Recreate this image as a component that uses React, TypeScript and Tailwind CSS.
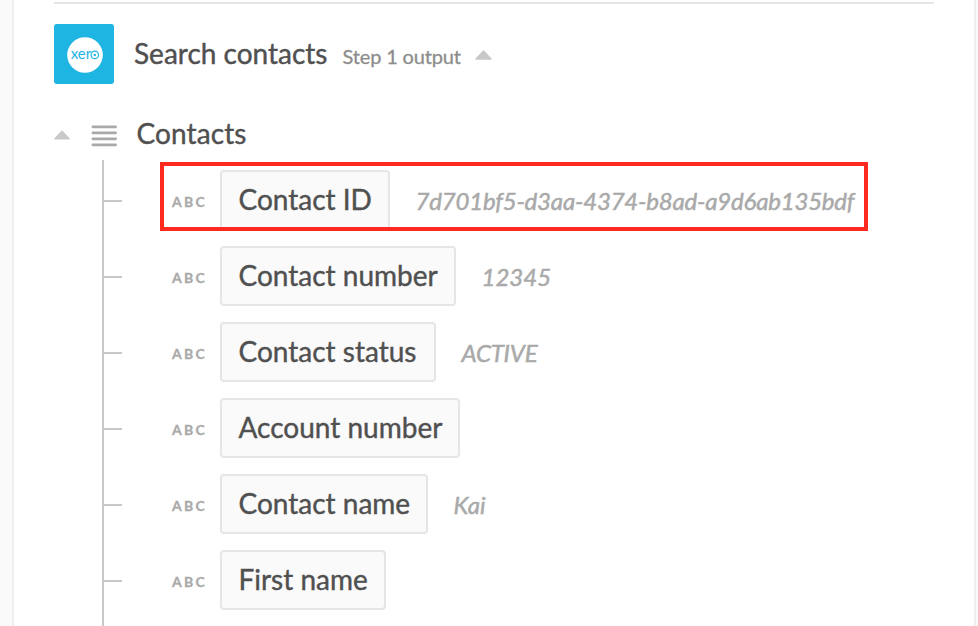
type Field = { name: string; value?: string; width: string; tracking?: string };

const fields: Field[] = [
  { name: "Contact ID", value: "7d701bf5-d3aa-4374-b8ad-a9d6ab135bdf", width: "w-[170px]", tracking: "tracking-[-0.2px]" },
  { name: "Contact number", value: "12345", width: "w-[236px]", tracking: "tracking-normal" },
  { name: "Contact status", value: "ACTIVE", width: "w-[216px]", tracking: "tracking-[-0.2px]" },
  { name: "Account number", width: "w-[240px]" },
  { name: "Contact name", value: "Kai", width: "w-[208px]", tracking: "tracking-normal" },
  { name: "First name", width: "w-[166px]" },
];

function XeroLogo() {
  return (
    <div className="flex size-[60px] shrink-0 items-center justify-center rounded-[3px] bg-[#1fb5e2]">
      <svg width="60" height="60" viewBox="0 0 60 60">
        <circle cx="31" cy="31" r="17.8" fill="#fff" />
        <text x="16.7" y="34.9" textLength="20.5" lengthAdjust="spacingAndGlyphs" fill="#1fb5e2" className="font-['Lato',sans-serif] text-[16px] font-normal">
          xer
        </text>
        <circle cx="40.8" cy="30.9" r="3.7" fill="none" stroke="#1fb5e2" strokeWidth="1.2" />
        <circle cx="40.8" cy="30.9" r="1.2" fill="#1fb5e2" />
      </svg>
    </div>
  );
}

function Caret({ className }: { className: string }) {
  return (
    <svg viewBox="0 0 17 10" width="17" height="10" className={className}>
      <path d="M1 9 L8.5 1 L16 9 Z" fill="#c8c8c8" stroke="#c8c8c8" strokeWidth="1.4" strokeLinejoin="round" />
    </svg>
  );
}

function ListIcon() {
  return (
    <svg width="26" height="22" viewBox="0 0 26 22" className="mt-1 ml-[22px]">
      <g fill="#a9a9a9">
        <rect x="0.5" y="0.4" width="25.5" height="2.8" rx="1.4" />
        <rect x="0.5" y="6.4" width="25.5" height="2.8" rx="1.4" />
        <rect x="0.5" y="12.4" width="25.5" height="2.8" rx="1.4" />
        <rect x="0.5" y="18.4" width="25.5" height="2.8" rx="1.4" />
      </g>
    </svg>
  );
}

function FieldRow({ field }: { field: Field }) {
  return (
    <div className="flex h-[60px] items-center">
      <div className="mt-[2px] h-[2px] w-[18px] shrink-0 bg-[#c8c8c8]" />
      <div className="mt-[3px] ml-[50px] w-[48px] text-[14px] leading-5 font-bold tracking-[2.3px] text-[#a9a9a9] [-webkit-text-stroke:0.3px_#a9a9a9]">ABC</div>
      <div className={`flex h-[60px] items-center rounded-[4px] border-2 border-[#e6e6e6] bg-[#fafafa] pb-[2px] pl-[16.5px] text-[28px] leading-9 text-[#505050] ${field.width}`}>
        <span className="whitespace-nowrap [-webkit-text-stroke:0.4px_#505050]">{field.name}</span>
      </div>
      {field.value && (
        <div className={`mt-[2px] ml-[25.5px] text-[24px] leading-8 whitespace-nowrap text-[#a9a9a9] italic [-webkit-text-stroke:0.5px_#a9a9a9] ${field.tracking}`}>{field.value}</div>
      )}
    </div>
  );
}

export default function App() {
  return (
    <div className="h-[626px] w-[978px] overflow-hidden bg-[#fafafa] pl-3 font-['Lato',sans-serif]">
      <main className="relative h-full w-[964px] border-x-2 border-[#efefef] bg-white pt-[2px] pl-10">
        <div className="h-[2px] w-[880px] bg-[#e6e6e6]" />
        <header className="mt-5 flex h-[60px] items-center">
          <XeroLogo />
          <h1 className="mb-[2px] ml-5 text-[28px] leading-9 whitespace-nowrap text-[#505050] [-webkit-text-stroke:0.4px_#505050]">Search contacts</h1>
          <span className="mt-1 ml-[15px] text-[20px] leading-6 tracking-[-0.15px] whitespace-nowrap text-[#8c8c8c] [-webkit-text-stroke:0.3px_#8c8c8c]">Step 1 output</span>
          <Caret className="mt-[2px] ml-[14px]" />
        </header>
        <div className="mt-8 flex h-9 items-center">
          <Caret className="mt-[2px] -mr-[1px] w-4" />
          <ListIcon />
          <h2 className="mb-[2px] ml-[19.5px] text-[28px] leading-9 tracking-[0.1px] text-[#505050] [-webkit-text-stroke:0.4px_#505050]">Contacts</h2>
        </div>
        <section className="mt-2 ml-12 flex h-[466px] flex-col gap-4 border-l-2 border-[#c8c8c8] pt-[10px]">
          {fields.map((field) => (
            <FieldRow key={field.name} field={field} />
          ))}
        </section>
        <div className="pointer-events-none absolute top-[162px] left-[146px] h-[69px] w-[708px] border-4 border-[#ff2a1f]" />
      </main>
    </div>
  );
}
